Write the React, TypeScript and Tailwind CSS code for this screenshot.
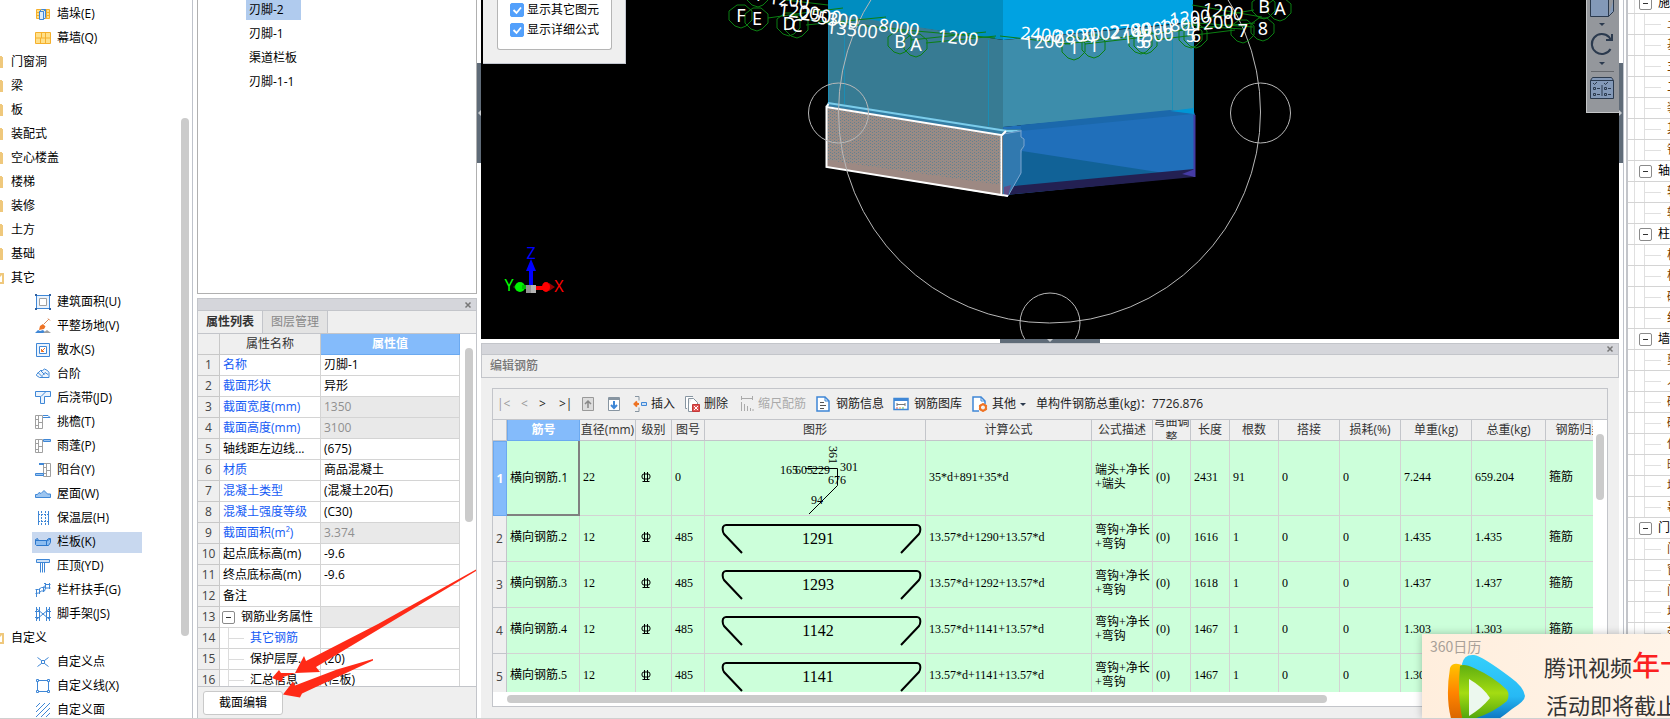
import React, { useState } from 'react';

type TreeItem = { label: string; icon?: string; open?: boolean };

const treeItems: TreeItem[] = [
  { label: '墙垛(E)', icon: 'pier' },
  { label: '幕墙(Q)', icon: 'curtain' },
  { label: '门窗洞' },
  { label: '梁' },
  { label: '板' },
  { label: '装配式' },
  { label: '空心楼盖' },
  { label: '楼梯' },
  { label: '装修' },
  { label: '土方' },
  { label: '基础' },
  { label: '其它', open: true },
  { label: '建筑面积(U)', icon: 'area' },
  { label: '平整场地(V)', icon: 'ground' },
  { label: '散水(S)', icon: 'apron' },
  { label: '台阶', icon: 'step' },
  { label: '后浇带(JD)', icon: 'strip' },
  { label: '挑檐(T)', icon: 'eave' },
  { label: '雨蓬(P)', icon: 'canopy' },
  { label: '阳台(Y)', icon: 'balcony' },
  { label: '屋面(W)', icon: 'roof' },
  { label: '保温层(H)', icon: 'insulation' },
  { label: '栏板(K)', icon: 'parapet' },
  { label: '压顶(YD)', icon: 'coping' },
  { label: '栏杆扶手(G)', icon: 'railing' },
  { label: '脚手架(JS)', icon: 'scaffold' },
  { label: '自定义', open: true },
  { label: '自定义点', icon: 'point' },
  { label: '自定义线(X)', icon: 'line' },
  { label: '自定义面', icon: 'face' },
];

const B = '#3f87d6';
const L = '#dcebfa';
const G = '#a0a0a0';

const treeIcons: Record<string, React.ReactNode> = {
  pier: (
    <>
      <path d="M1.500 3.500h13v9h-13zM1.500 6.500h13M1.500 9.500h13M11.500 3.500v9" fill="#ffe08a" stroke="#f5b02c" />
      <path d="M4.500 5.500l2-2h4v8l-2 2h-4zM8.500 5.500v8M4.500 5.500h4l2-2" fill={L} stroke={B} />
    </>
  ),
  curtain: (
    <path d="M.5 2.500h15v11H.5zM.5 8h15M6.500 2.500V8M10.500 8v5.500M10.500 2.500V8M5.500 8v5.500" fill="#ffe08a" stroke="#f5b02c" />
  ),
  area: (
    <>
      <path d="M1.500 1.500h13v13h-13z" fill="#eaf3fd" stroke={B} />
      <path d="M4.500 4.500h7v7h-7z" fill="#fff" stroke={G} />
      <path d="M0 0h2v2H0zM14 0h2v2h-2zM0 14h2v2H0zM14 14h2v2h-2z" fill="#2f5f9f" />
    </>
  ),
  ground: (
    <>
      <path d="M0 15l3-3 2 1 3-1 3 3z" fill={B} />
      <path d="M8 15l4-3 4 3z" fill={G} />
      <path d="M9 6l5-5M13 .5l2 2" stroke="#d98a5c" fill="none" />
      <path d="M5 8l3-2 2.500 2.500L9 11l-5 1z" fill="#ee7324" />
    </>
  ),
  apron: (
    <>
      <path d="M1.500 1.500h13v13h-13z" fill="#eaf3fd" stroke={B} />
      <path d="M4.500 4.500h7v7h-7z" fill="#fff" stroke={B} />
      <path d="M10 6L6.500 9.500M6.500 7v2.500H9" stroke="#ee7324" fill="none" />
    </>
  ),
  step: (
    <path d="M1.500 8.500l4-4h2l2-1.500 3 1.500 1.500 2v5h-9.500l-3-2zM3 6.500l5 5M5.500 4.500l4 4M7.500 9.500l2.500-3 3 2" fill="#eef5fd" stroke={B} />
  ),
  strip: (
    <path d="M.5 1.500h15v5h-6v7h-4v-7h-5zM6 6.500l5-5" fill="#eaf3fd" stroke={B} />
  ),
  eave: (
    <>
      <path d="M.5 1.500h7v13h-7zM3.500 1.500v13M.5 5.500h3M3.500 8.500h4M.5 11.500h3" fill="none" stroke={G} />
      <path d="M8 1.500h5l2 2M8 3.500h7" fill="none" stroke={B} />
    </>
  ),
  canopy: (
    <>
      <path d="M.5 1.500h7v13h-7zM3.500 1.500v13M.5 5.500h3M3.500 8.500h4M.5 11.500h3" fill="none" stroke={G} />
      <path d="M8.500 1.500h7v2h-7z" fill="#9cc5f0" stroke={B} />
    </>
  ),
  balcony: (
    <>
      <path d="M8.500 1.500h7v13h-7zM11.500 1.500v13M8.500 5.500h3M11.500 8.500h4M8.500 11.500h3" fill="none" stroke={G} />
      <path d="M4 2h5" stroke={B} strokeWidth="2" />
      <path d="M.5 11.500h8v2h-8z" fill="#9cc5f0" stroke={B} />
    </>
  ),
  roof: <path d="M.5 11.500v-3h2l1.500-2 2 1 3-3 3.500 3.500h3v3.500z" fill="#9cc5f0" stroke={B} />,
  insulation: (
    <>
      <path d="M3.500 1v14M13.500 1v14" stroke={B} />
      <path d="M6.500 1v14M10.500 1v14" stroke={B} strokeDasharray="2 1" />
      <path d="M3 4.500h11M3 11.500h11" stroke={B} strokeDasharray="2 1" />
    </>
  ),
  parapet: (
    <>
      <path d="M.5 5.500l2-1 1 2h8l2-2h2v4l-2 3h-12l-1-1z" fill="#8dbdf0" stroke="#2b77cc" />
      <path d="M.5 6.500h11v5M12 7l3-2" fill="none" stroke="#2b77cc" />
    </>
  ),
  coping: <path d="M1.500 1.500h13v3h-13zM5.500 14.500v-10M7.500 14.500v-10M9.500 14.500v-10" fill="#cfe2f7" stroke={B} />,
  railing: (
    <path d="M1.500 15V7M.5 7.500h3l3-2h3l1-3h5M.5 11.500l3-.5 3-2h3l1-3h5M4.500 12V7M8.500 10V4.500M10.500 7V1M14.500 7V1M9 1.500h2" fill="none" stroke={B} />
  ),
  scaffold: (
    <path d="M1.500 1v14M4.500 1v14M11.500 1v14M14.500 1v14M0 5.500h5M0 11.500h5M11 5.500h5M11 11.500h5M2 3l12 10M14 3L2 13" fill="none" stroke={B} />
  ),
  point: <path d="M2.500 3.500l4 3M9.500 9.500l4 3M13.500 3.500l-4 3M6.500 9.500l-4 3M6.500 6.500h3v3h-3z" fill="none" stroke={B} />,
  line: (
    <>
      <path d="M2.500 2.500h11v11h-11z" fill="none" stroke={B} />
      <path d="M1.500 1.500h2v2h-2zM12.500 1.500h2v2h-2zM1.500 12.500h2v2h-2zM12.500 12.500h2v2h-2z" fill="#fff" stroke={B} />
    </>
  ),
  face: <path d="M1 5l4-4M1 10l9-9M1 15L15 1M6 15l9-9M11 15l4-4" fill="none" stroke={B} />,
};

type Prop = { name: string; value?: string; kind?: 'blue' | 'locked' | 'group' | 'child' | 'childBlue' };

const properties: Prop[] = [
  { name: '名称', value: '刃脚-1', kind: 'blue' },
  { name: '截面形状', value: '异形', kind: 'blue' },
  { name: '截面宽度(mm)', value: '1350', kind: 'locked' },
  { name: '截面高度(mm)', value: '3100', kind: 'locked' },
  { name: '轴线距左边线...', value: '(675)' },
  { name: '材质', value: '商品混凝土', kind: 'blue' },
  { name: '混凝土类型', value: '(混凝土20石)', kind: 'blue' },
  { name: '混凝土强度等级', value: '(C30)', kind: 'blue' },
  { name: '截面面积(m²)', value: '3.374', kind: 'locked' },
  { name: '起点底标高(m)', value: '-9.6' },
  { name: '终点底标高(m)', value: '-9.6' },
  { name: '备注' },
  { name: '钢筋业务属性', kind: 'group' },
  { name: '其它钢筋', kind: 'childBlue' },
  { name: '保护层厚...', value: '(20)', kind: 'child' },
  { name: '汇总信息', value: '(栏板)', kind: 'child' },
];

const rebars = [
  { name: '横向钢筋.2', len: '1291', formula: '13.57*d+1290+13.57*d', total: '1616', weight: '1.435' },
  { name: '横向钢筋.3', len: '1293', formula: '13.57*d+1292+13.57*d', total: '1618', weight: '1.437' },
  { name: '横向钢筋.4', len: '1142', formula: '13.57*d+1141+13.57*d', total: '1467', weight: '1.303' },
  { name: '横向钢筋.5', len: '1141', formula: '13.57*d+1141+13.57*d', total: '1467', weight: '1.303' },
];

const layerGroups = [
  { name: '施工段', children: ['土方工程', '基础工程', '主体结构', '二次结构', '装饰装修', '其它土建', '钢筋工程'] },
  { name: '轴线', children: ['轴网', '辅助轴线'] },
  { name: '柱', children: ['柱', '构造柱', '砌体柱', '约束边缘柱'] },
  { name: '墙', children: ['剪力墙', '人防门框墙', '砌体墙', '砌体加筋', '保温墙', '暗梁', '墙垛', '幕墙'] },
  { name: '门窗洞', children: ['门', '窗', '门联窗', '墙洞', '带形窗', '带形洞', '飘窗', '老虎窗'] },
];

const ComponentTree: React.FC = () => (
  <nav className="relative w-[193px] shrink-0 overflow-hidden border-r border-[#bfc3cb] bg-white pt-[2px]">
    <ul>
      {treeItems.map((item) => (
        <li key={item.label} className="flex h-6 items-center">
          {item.icon ? (
            <button
              className={`ml-8 flex h-[21px] w-[110px] items-center gap-[6px] pl-[3px] text-left whitespace-nowrap ${item.icon === 'parapet' ? 'bg-[#c8d8ef]' : ''}`}
            >
              <svg className="h-4 w-4 shrink-0" viewBox="0 0 16 16">{treeIcons[item.icon]}</svg>
              {item.label}
            </button>
          ) : (
            <button className="flex items-center gap-[7px]">
              <svg className="h-[14px] w-1" viewBox="0 0 4 14">
                {item.open ? (
                  <path d="M0 2h4v11H0v-2h2V4L0 6z" fill="#efc87c" />
                ) : (
                  <path d="M0 1h2v1h1v11H0z" fill="#efc87c" />
                )}
              </svg>
              {item.label}
            </button>
          )}
        </li>
      ))}
    </ul>
    <div className="absolute top-[118px] right-[3px] h-[518px] w-2 rounded-full bg-[#cbcbcb]" />
  </nav>
);

const PropertyPanel: React.FC = () => (
  <section className="flex h-[420px] shrink-0 flex-col border border-b-0 border-[#c3c5ca] bg-[#efefef]">
    <div className="flex h-3 shrink-0 items-center justify-end border-b border-[#c3c5ca] bg-[#d5d6db] pr-1">
      <CloseButton />
    </div>
    <div className="flex h-[23px] shrink-0 border-b border-[#c3c5ca]">
      <button className="w-[65px] border-r border-[#c3c5ca] font-bold text-[#333]">属性列表</button>
      <button className="w-[65px] border-r border-[#c3c5ca] bg-[#e3e3e3] text-[#888]">图层管理</button>
    </div>
    <div className="relative min-h-0 flex-1 overflow-hidden border-b border-[#c3c5ca] bg-white">
      <table className="w-[262px] table-fixed border-separate border-spacing-0">
        <colgroup>
          <col className="w-[22px]" />
          <col className="w-[101px]" />
          <col className="w-[139px]" />
        </colgroup>
        <thead>
          <tr className="h-[21px] bg-[#efefef] text-[#333]">
            <th className="border-r border-b border-[#c8c8c8]" />
            <th className="border-r border-b border-[#c8c8c8] p-0 font-normal">属性名称</th>
            <th className="border-r border-b border-[#6ba9f0] bg-[#84bbfb] p-0 font-bold text-white">属性值</th>
          </tr>
        </thead>
        <tbody>
          {properties.map((p, i) => {
            const blue = p.kind === 'blue' || p.kind === 'locked' || p.kind === 'childBlue';
            const child = p.kind === 'child' || p.kind === 'childBlue';
            const grey = p.kind === 'locked' || p.kind === 'group';
            return (
              <tr key={p.name} className="h-[21px] whitespace-nowrap">
                <th className="border-r border-b border-[#c8c8c8] bg-[#efefef] p-0 font-normal text-[#444]">{i + 1}</th>
                <td className={`border-r border-b border-[#d4d4d4] p-0 ${blue ? 'text-[#155bf5]' : ''}`}>
                  <div className={`flex h-5 items-center ${child ? '' : 'pl-[3px]'}`}>
                    {p.kind === 'group' && <ExpandBox className="mr-[6px] -ml-px" />}
                    {child && (
                      <span className="mr-[6px] ml-[8px] flex h-[21px] w-4 items-center border-l border-[#dcdcdc]">
                        <span className="h-px w-full bg-[#dcdcdc]" />
                      </span>
                    )}
                    {p.name}
                  </div>
                </td>
                <td className={`border-r border-b border-[#d4d4d4] py-0 pr-0 pl-[3px] ${grey ? 'bg-[#e9e9e9] text-[#909090]' : ''}`}>
                  {p.value}
                </td>
              </tr>
            );
          })}
        </tbody>
      </table>
      <div className="absolute top-[14px] right-[3px] h-[174px] w-2 rounded-full bg-[#cbcbcb]" />
    </div>
    <div className="flex h-[31px] shrink-0 items-center pt-px pl-[5px]">
      <button className="h-6 w-20 rounded-[3px] border border-[#c9c9c9] bg-white">截面编辑</button>
    </div>
  </section>
);

const CloseButton: React.FC = () => (
  <button aria-label="关闭">
    <svg className="h-2 w-2" viewBox="0 0 8 8">
      <path d="M1.500 1.500l5 5M6.500 1.500l-5 5" stroke="#777" strokeWidth="1.500" />
    </svg>
  </button>
);

const ExpandBox: React.FC<{ className?: string }> = ({ className = '' }) => (
  <button aria-label="折叠" className={`shrink-0 ${className}`}>
    <svg className="h-[13px] w-[13px]" viewBox="0 0 13 13">
      <rect x=".5" y=".5" width="12" height="12" rx="1.500" fill="#fff" stroke="#8a8a8a" />
      <path d="M4 6.500h5" stroke="#333" />
    </svg>
  </button>
);

// x, y, text, tilt in degrees
const dimensions: [number, number, string, number][] = [
  [789, 0, '1200', 6],
  [799, 12, '1200', 6],
  [821, 16, '2500', 6],
  [838, 20, '5300', 6],
  [852, 30, '13500', 6],
  [899, 28, '8000', 8],
  [958, 38, '1200', 6],
  [1041, 35, '2400', 5],
  [1044, 42, '1200', -3],
  [1075, 36, '2800', -4],
  [1100, 34, '3002', -4],
  [1130, 31, '2700', -4],
  [1152, 29, '8000', -4],
  [1148, 36, '11500', -4],
  [1180, 25, '1800', -5],
  [1190, 18, '1200', -5],
  [1213, 23, '1200', -4],
  [1223, 12, '1200', 8],
];

const axisMarks: [number, number, string][] = [
  [758, -5, '1'],
  [741, 16, 'F'],
  [757, 19, 'E'],
  [789, 24, 'D'],
  [797, 26, 'C'],
  [900, 42, 'B'],
  [916, 45, 'A'],
  [1074, 48, '1'],
  [1094, 46, '1'],
  [1141, 42, '5'],
  [1146, 42, '6'],
  [1191, 36, '5'],
  [1196, 36, '6'],
  [1243, 31, '7'],
  [1263, 29, '8'],
  [1264, 7, 'B'],
  [1280, 9, 'A'],
];

const ModelView: React.FC = () => (
  <svg className="absolute top-0 left-0 h-[339px] w-[1138px]" viewBox="481 0 1138 339" fontFamily="'Noto Sans', sans-serif">
    <defs>
      <pattern id="mesh" width="4" height="3" patternUnits="userSpaceOnUse">
        <rect width="4" height="3" fill="#998b85" />
        <path d="M0 0h1v1H0zM2 2h1v1H2z" fill="#65818f" />
      </pattern>
    </defs>
    <path d="M828 0h176v40L828 15z" fill="#008dc0" />
    <path d="M1003 0h190v22l-190 18z" fill="#00a2e2" />
    <path d="M828 12l56 10 119 18v90L828 103z" fill="#377b93" />
    <path d="M1003 40l190-17v87l-190 17z" fill="#3d8dab" />
    <path d="M828.500 12v90M844.500 20v84M988.500 40v86M1172.500 26v84M1193.500 20v90" stroke="#1b8db5" />
    <path d="M1003 127l190-18 2 6v61l-189 19z" fill="#206fba" />
    <path d="M1021 125l149-15 23 4-172 17z" fill="#1b68ab" />
    <path d="M1170 111l24-3v6z" fill="#0096d5" />
    <path d="M1022 151l155 24-172 14 8-12z" fill="#116297" />
    <path d="M1004 187l190-18v8l-188 18z" fill="#232052" />
    <path d="M1182 174l13-5v8z" fill="#453ba5" />
    <path d="M1194.500 115v62" stroke="#453ba5" strokeWidth="2" />
    <path d="M828 102l175 27h18l-1 4-18 3-176-30z" fill="#347da4" />
    <path d="M828 103l179 28h13" stroke="#7ccdea" strokeWidth="2" fill="none" />
    <path d="M1003 134l18-4v7l3 2v9l-3 4v22l-14 23-4-2z" fill="#3179af" />
    <path d="M1021 130v7l3 2v7l-3 4v23l-13 23M1003 134l18-3" stroke="#7ba5cf" fill="none" />
    <path d="M1004 187l7-2-3 11-4-1z" fill="#5e4e88" />
    <path d="M826 107l176 28v61l-176-29z" fill="url(#mesh)" />
    <path d="M827 160l175 25v10l-175-28z" fill="#9d8983" />
    <path d="M826.500 107l175 28v60l-175-28zM826.500 107l2-3M1002 135l4-4M1002 195l6 1" fill="none" stroke="#fff" strokeWidth="2" />

    <g fill="none" stroke="#b8b8b8">
      <circle cx="1049.500" cy="112" r="211" />
      <circle cx="838.500" cy="113" r="30" />
      <circle cx="1260.500" cy="113" r="30" />
      <circle cx="1050" cy="323" r="30" />
    </g>

    <g stroke="#0b7f12" fill="none">
      <path d="M760 -3l68 8M768 18l35-5 40-5M806 25l80-8M810 20l95 10 90 8M911 40l75-8M926 43l70-7M1000 36l70 8M1065 44l120-14M1085 44l60-7M1155 40l80-10M1195 28l60-5M1192 5l70 12M1195 20l59-10M1253 27l-70-5M1210 27l33 2" />
      {axisMarks.map(([x, y], i) => (
        <path
          key={i}
          transform={`translate(${x} ${y})`}
          d="M-4 -11h8l7 6v9l-6 6-5 2-6-2-6-6v-9z"
        />
      ))}
    </g>
    <g fill="#fff" fontSize="18" textAnchor="middle">
      {dimensions.map(([x, y, text, tilt], i) => (
        <text key={i} transform={`translate(${x} ${y}) rotate(${tilt})`} dy="6">{text}</text>
      ))}
      {axisMarks.map(([x, y, text], i) => (
        <text key={i} x={x} y={y + 6}>{text}</text>
      ))}
    </g>

    <path d="M531 285v-16" stroke="#00f" strokeWidth="4" />
    <path d="M526 271l5-12 5 12z" fill="#00f" />
    <path d="M536 288h10" stroke="#f00" strokeWidth="4" />
    <path d="M549 283l6 4-6 4z" fill="#900" />
    <ellipse cx="546" cy="287" rx="4" ry="5" fill="#f00" />
    <path d="M518 283l-5 4 5 4z" fill="#006a00" />
    <circle cx="520" cy="287" r="5" fill="#00f400" />
    <path d="M522 287h5" stroke="#00c000" strokeWidth="4" />
    <path d="M526 285h10v8h-10z" fill="#b5b5b5" />
    <path d="M526 285h5v8h-5z" fill="#949494" />
    <g fontSize="16" textAnchor="middle">
      <text x="531" y="259" fill="#00f">Z</text>
      <text x="509" y="291" fill="#0f0">Y</text>
      <text x="559" y="292" fill="#f00">X</text>
    </g>
  </svg>
);

const Option: React.FC<{ label: string }> = ({ label }) => {
  const [checked, setChecked] = useState(true);
  return (
    <label className="flex h-6 items-center gap-[3px]">
      <span className="relative flex h-[14px] w-[14px]">
        <input
          type="checkbox"
          checked={checked}
          onChange={(e) => setChecked(e.target.checked)}
          className="h-[14px] w-[14px] appearance-none rounded-[2px] border border-[#53a0fb] checked:bg-[#53a0fb]"
        />
        {checked && (
          <svg className="pointer-events-none absolute inset-0 h-[14px] w-[14px]" viewBox="0 0 14 14">
            <path d="M3.500 7l3 3 4.500-5.500" fill="none" stroke="#fff" strokeWidth="1.800" />
          </svg>
        )}
      </span>
      {label}
    </label>
  );
};

const Viewport: React.FC = () => (
  <main className="relative min-h-0 flex-1 overflow-hidden bg-black">
    <ModelView />
    <div className="absolute top-0 left-[2px] h-16 w-[143px] border-r border-b border-[#c3c7d0] bg-[#efefef] pr-[13px] pl-[14px]">
      <div className="flex h-[50px] flex-col justify-end rounded-b-[3px] border border-t-0 border-[#b5b5b5] bg-white pb-[9px] pl-3">
        <Option label="显示其它图元" />
        <Option label="显示详细公式" />
      </div>
    </div>
    <div className="absolute top-0 right-0 flex h-[113px] w-[33px] flex-col items-center border-b border-l border-[#c4c6c8] bg-[#94979c] pr-[2px]">
      <button aria-label="视图">
        <svg className="h-[18px] w-6" viewBox="0 0 24 18" fill="#8399b8" stroke="#2b3a4e">
          <path d="M.5 0v16.500h18V0M18.500 16.500l5-5V0" />
        </svg>
      </button>
      <Caret className="mt-[5px]" />
      <button aria-label="旋转" className="mt-[6px]">
        <svg className="h-6 w-6" viewBox="0 0 24 24" fill="none" stroke="#2b3a4e" strokeWidth="2">
          <path d="M20.500 17A10 10 0 1 1 19 5l2 3M22 2v6h-6" />
        </svg>
      </button>
      <Caret className="mt-[6px]" />
      <div className="mt-[6px] h-px w-[23px] shrink-0 bg-[#66696e]" />
      <button aria-label="显示设置" className="mt-1">
        <svg className="h-6 w-6" viewBox="0 0 24 24" fill="none" stroke="#2b3a4e">
          <path d="M.5 4.500l2-3h19l2 3v18H.500z" fill="#8399b8" />
          <path d="M.5 4.500h23M12 9v11M3 7l1.500 1.500L7 6M14 7l1.500 1.500L18 6M3.500 11.500h2v2h-2zM3.500 17.500h2v2h-2zM14.500 11.500h2v2h-2zM14.500 17.500h2v2h-2zM7 12.500h3M7 18.500h3M18 12.500h3M18 18.500h3" />
        </svg>
      </button>
    </div>
  </main>
);

const Caret: React.FC<{ className?: string }> = ({ className = '' }) => (
  <svg className={`h-[3px] w-[6px] shrink-0 ${className}`} viewBox="0 0 6 3">
    <path d="M0 0h6L3 3z" fill="#2b3a4e" />
  </svg>
);

const RebarToolbar: React.FC = () => (
  <div className="flex h-[31px] shrink-0 items-center border-b border-[#c3c5ca] pl-1 whitespace-nowrap text-[#222]">
    <button className="w-6 text-left text-[#999]">|&lt;</button>
    <button className="w-[18px] text-left text-[#999]">&lt;</button>
    <button className="w-5 text-left">&gt;</button>
    <button className="w-[22px] text-left">&gt;|</button>
    <button aria-label="上移" className="mr-3">
      <svg className="h-[14px] w-[14px]" viewBox="0 0 14 14" fill="none">
        <path d="M1.500.5h11v13h-11z" fill="#ddd" stroke="#999" />
        <path d="M7 11V4M4 7l3-3 3 3" stroke="#888" strokeWidth="1.500" />
      </svg>
    </button>
    <button aria-label="下移" className="mr-3">
      <svg className="h-[14px] w-[14px]" viewBox="0 0 14 14" fill="none">
        <path d="M1.500.5h11v13h-11z" fill="#fff" stroke="#8795a1" />
        <path d="M1 2h12" stroke="#8795a1" strokeWidth="2" />
        <path d="M7 4v7M4 8l3 3 3-3" stroke={B} strokeWidth="2" />
      </svg>
    </button>
    <button className="mr-[9px] flex items-center gap-1">
      <svg className="h-4 w-[14px]" viewBox="0 0 14 16" fill="none">
        <path d="M2 .5h4v4M2 15.500h4v-4" stroke="#8795a1" />
        <path d="M6 8H1.500M4 5.500L1.500 8 4 10.500" stroke="#ee7324" strokeWidth="2" />
        <path d="M8.500 6.500h5v3h-5z" fill="#cfe2f7" stroke={B} />
      </svg>
      插入
    </button>
    <button className="mr-3 flex items-center gap-1">
      <svg className="h-4 w-4" viewBox="0 0 16 16" fill="none">
        <path d="M9 .5H1.500v12H3M4.500 2.500h5l4 4v9h-9z" stroke="#8795a1" fill="#fff" />
        <path d="M8.500 8.500h7v7h-7z" fill="#e05656" stroke="#c43838" />
        <path d="M10 10l4 4M14 10l-4 4" stroke="#fff" />
      </svg>
      删除
    </button>
    <button className="mr-[10px] flex items-center gap-1 text-[#aaa]" disabled>
      <svg className="h-4 w-[14px]" viewBox="0 0 14 16" fill="none" stroke="#aaa">
        <path d="M1.500 0v4M12.500 0v4M1.500 2.500h11" />
        <path d="M1.500 6v9M4.500 8v7M7.500 10v5M10.500 12v3M13 13v2" />
      </svg>
      缩尺配筋
    </button>
    <button className="mr-[9px] flex items-center gap-[6px]">
      <svg className="h-4 w-[14px]" viewBox="0 0 14 16" fill="none" stroke={B}>
        <path d="M1 1h8l4 4v10H1z" fill="#fff" strokeWidth="1.500" />
        <path d="M9 1v4h4" />
        <path d="M4 6.500h4M4 9.500h6M4 12.500h4" stroke="#555" />
      </svg>
      钢筋信息
    </button>
    <button className="mr-[10px] flex items-center gap-[5px]">
      <svg className="h-4 w-4" viewBox="0 0 16 16" fill="none">
        <path d="M1 2.500h14v11H1z" fill="#fff" stroke={B} strokeWidth="1.500" />
        <path d="M1 3.500h14" stroke={B} strokeWidth="3" />
        <path d="M4 7v3M4 8.500h8M12 7v3" stroke="#777" />
        <path d="M3 12h2" stroke="#e05656" />
        <path d="M6 12h2" stroke="#f5b02c" />
        <path d="M9 12h2" stroke="#5cb85c" />
      </svg>
      钢筋图库
    </button>
    <button className="mr-[10px] flex items-center gap-1">
      <svg className="h-4 w-4" viewBox="0 0 16 16" fill="none">
        <path d="M13 8V5L9 1H1v14h6" fill="#fff" stroke={B} strokeWidth="1.500" />
        <path d="M9 1v4h4" stroke={B} />
        <circle cx="11" cy="11.500" r="3" stroke="#ee7324" strokeWidth="2" />
        <path d="M11 7v2M11 14v2M7 9.500l2 1M13 12.500l2 1M7 13.500l2-1M13 10.500l2-1" stroke="#ee7324" strokeWidth="1.500" />
      </svg>
      其他
      <Caret />
    </button>
    <span>单构件钢筋总重(kg)：7726.876</span>
  </div>
);

const GradeSymbol: React.FC = () => (
  <svg className="ml-[2px] h-[10px] w-[10px]" viewBox="0 0 10 10" fill="none" stroke="#000">
    <rect x="1" y="2" width="8" height="5" rx="2" />
    <path d="M3.500 0v9M6.500 0v9M1.500 9.500h7" />
  </svg>
);

const headClass = 'h-[21px] border-r border-b border-[#c3c5ca] p-0 font-normal';
const cellClass = 'border-r border-b border-[#d3d3d3] pt-0 pr-0 pb-[3px] pl-[3px]';

const RebarTable: React.FC = () => (
  <table className="w-[1121px] table-fixed border-separate border-spacing-0">
    <colgroup>
      <col className="w-[14px]" />
      <col className="w-[73px]" />
      <col className="w-[56px]" />
      <col className="w-[36px]" />
      <col className="w-[33px]" />
      <col className="w-[221px]" />
      <col className="w-[166px]" />
      <col className="w-[61px]" />
      <col className="w-[38px]" />
      <col className="w-[39px]" />
      <col className="w-[49px]" />
      <col className="w-[61px]" />
      <col className="w-[61px]" />
      <col className="w-[71px]" />
      <col className="w-[74px]" />
      <col className="w-[68px]" />
    </colgroup>
    <thead>
      <tr className="bg-[#efefef] whitespace-nowrap text-[#333]">
        <th className={headClass} />
        <th className="h-[21px] border border-t-0 border-[#6ba9f0] bg-[#84bbfb] p-0 font-bold text-white">筋号</th>
        <th className={headClass}>直径(mm)</th>
        <th className={headClass}>级别</th>
        <th className={headClass}>图号</th>
        <th className={headClass}>图形</th>
        <th className={headClass}>计算公式</th>
        <th className={headClass}>公式描述</th>
        <th className={headClass}>
          <div className="flex h-5 items-center justify-center overflow-hidden leading-4 whitespace-normal">弯曲调整</div>
        </th>
        <th className={headClass}>长度</th>
        <th className={headClass}>根数</th>
        <th className={headClass}>搭接</th>
        <th className={headClass}>损耗(%)</th>
        <th className={headClass}>单重(kg)</th>
        <th className={headClass}>总重(kg)</th>
        <th className={headClass}>钢筋归类</th>
      </tr>
    </thead>
    <tbody className="bg-[#ccffda] font-['Liberation_Serif','Noto_Sans_CJK_SC',serif] leading-[14px]">
      <tr className="h-[75px]">
        <th className="border border-[#6ba9f0] bg-[#84bbfb] p-0 font-['Open_Sans',sans-serif] text-white">1</th>
        <td className="border-r-2 border-b-2 border-[#808080] py-0 pr-0 pl-[3px] font-['Open_Sans','Noto_Sans_CJK_SC',sans-serif]">横向钢筋.1</td>
        <td className={cellClass}>22</td>
        <td className={cellClass}><GradeSymbol /></td>
        <td className={cellClass}>0</td>
        <td className="border-r border-b border-[#d3d3d3] py-0 pr-0 pl-[3px]">
          <svg className="block h-[74px] w-[215px]" viewBox="0 0 215 74" fontSize="12">
            <path d="M97 27.500h32.500v17L101 73" fill="none" stroke="#000" />
            <text x="72" y="33">165</text>
            <text x="87" y="33">605</text>
            <text x="104" y="33">229</text>
            <text x="132" y="30">301</text>
            <text x="120" y="43">676</text>
            <text x="103" y="63">94</text>
            <text transform="translate(121 5) rotate(90)">361</text>
          </svg>
        </td>
        <td className={cellClass}>35*d+891+35*d</td>
        <td className={cellClass}>端头+净长<br />+端头</td>
        <td className={cellClass}>(0)</td>
        <td className={cellClass}>2431</td>
        <td className={cellClass}>91</td>
        <td className={cellClass}>0</td>
        <td className={cellClass}>0</td>
        <td className={cellClass}>7.244</td>
        <td className={cellClass}>659.204</td>
        <td className={cellClass}>箍筋</td>
      </tr>
      {rebars.map((r, i) => (
        <tr key={r.name} className="h-[46px]">
          <th className="border-r border-b border-[#c3c5ca] bg-[#efefef] p-0 font-['Open_Sans',sans-serif] font-normal text-[#444]">{i + 2}</th>
          <td className={cellClass}>{r.name}</td>
          <td className={cellClass}>12</td>
          <td className={cellClass}><GradeSymbol /></td>
          <td className={cellClass}>485</td>
          <td className={cellClass}>
            <svg className="block h-[42px] w-[215px]" viewBox="0 0 215 42">
              <path
                d="M34 37L16 18q-2-3-1-7 1-2 3-2h191q2 0 3 2 1 4-1 7L193 37"
                fill="none"
                stroke="#000"
                strokeWidth="2"
              />
              <text x="110" y="28" fontSize="16" textAnchor="middle">{r.len}</text>
            </svg>
          </td>
          <td className={cellClass}>{r.formula}</td>
          <td className={cellClass}>弯钩+净长<br />+弯钩</td>
          <td className={cellClass}>(0)</td>
          <td className={cellClass}>{r.total}</td>
          <td className={cellClass}>1</td>
          <td className={cellClass}>0</td>
          <td className={cellClass}>0</td>
          <td className={cellClass}>{r.weight}</td>
          <td className={cellClass}>{r.weight}</td>
          <td className={cellClass}>箍筋</td>
        </tr>
      ))}
    </tbody>
  </table>
);

const RebarPanel: React.FC = () => (
  <section className="flex h-[375px] shrink-0 flex-col bg-[#efefef]">
    <div className="flex h-3 shrink-0 items-center justify-end border border-[#c3c5ca] bg-[#d5d6db] pr-1">
      <CloseButton />
    </div>
    <h2 className="flex h-[23px] shrink-0 items-center border border-t-0 border-[#c3c5ca] pl-2 font-medium text-[#777]">编辑钢筋</h2>
    <div className="flex min-h-0 flex-1 p-[11px] pt-[10px]">
      <div className="flex min-w-0 flex-1 flex-col border border-[#c3c5ca]">
        <RebarToolbar />
        <div className="flex min-h-0 flex-1 bg-white">
          <div className="min-w-0 flex-1 overflow-hidden">
            <RebarTable />
          </div>
          <div className="w-[14px] shrink-0 pt-[14px] pl-[3px]">
            <div className="h-[66px] w-2 rounded-full bg-[#cbcbcb]" />
          </div>
        </div>
        <div className="h-[14px] shrink-0 bg-white pt-[3px] pl-[14px]">
          <div className="h-2 w-[74.5%] rounded-full bg-[#cbcbcb]" />
        </div>
      </div>
    </div>
  </section>
);

const LayerTree: React.FC = () => (
  <aside className="flex w-[47px] shrink-0 overflow-hidden border-l border-[#bfc3cb] bg-white pl-[2px]">
    <div className="flex flex-1 flex-col justify-start overflow-hidden border-l-2 border-[#c3c5ca]">
      <ul className="-mt-[7px]">
        {layerGroups.map((group) => (
          <React.Fragment key={group.name}>
            <li className="flex h-[21px] items-center border-b border-[#d4d4d4] pl-[6px] whitespace-nowrap">
              <span className="mr-1 h-full w-px shrink-0 bg-[#e0e0e0]" />
              <ExpandBox className="mr-[6px]" />
              {group.name}
            </li>
            {group.children.map((child) => (
              <li key={child} className="flex h-[21px] items-center border-b border-[#d4d4d4] pl-[6px] whitespace-nowrap text-[#7a3d00]">
                <span className="mr-[9px] h-full w-px shrink-0 bg-[#e0e0e0]" />
                <span className="mr-[6px] flex h-full w-[17px] shrink-0 items-center border-l border-[#e0e0e0]">
                  <span className="h-px w-full bg-[#e0e0e0]" />
                </span>
                {child}
              </li>
            ))}
          </React.Fragment>
        ))}
      </ul>
    </div>
  </aside>
);

const AdPopup: React.FC = () => (
  <div className="absolute right-0 bottom-0 h-[84px] w-[248px] overflow-hidden bg-linear-to-r from-[#ffeedd] to-[#fff4e8] font-['Noto_Sans_CJK_SC',sans-serif] whitespace-nowrap shadow-[0_0_8px_rgba(0,0,0,0.25)]">
    <div className="pl-2 text-sm leading-6 text-[#a8a098]">360日历</div>
    <svg className="absolute top-5 left-6 h-[66px] w-[82px]" viewBox="0 0 82 66">
      <defs>
        <linearGradient id="adBlue" x1="0" y1="0" x2="0" y2="1">
          <stop offset="0" stopColor="#35d0fb" />
          <stop offset=".6" stopColor="#27b9f5" />
          <stop offset="1" stopColor="#0667b5" />
        </linearGradient>
        <linearGradient id="adOrange" x1="0" y1="0" x2="0" y2="1">
          <stop offset="0" stopColor="#ffc400" />
          <stop offset=".5" stopColor="#ff8400" />
          <stop offset="1" stopColor="#d46200" />
        </linearGradient>
        <linearGradient id="adGreen" x1="0" y1="0" x2="0" y2="1">
          <stop offset="0" stopColor="#5fae10" />
          <stop offset=".5" stopColor="#a4dc12" />
          <stop offset="1" stopColor="#48a00c" />
        </linearGradient>
      </defs>
      <path d="M16 10Q18 0 28 1q8 1 36 22 14 10 15 19 0 5-13 13-12 10-22 15H14z" fill="url(#adBlue)" />
      <path d="M4 14q2-5 8-4 7 1 12 4v54H6Q-1 45 4 14z" fill="url(#adOrange)" />
      <path d="M14 12q4-3 14 2 20 9 33 22 3 5 0 11-14 12-34 18-6 3-10 2-6-22-3-55z" fill="url(#adGreen)" />
      <path d="M23 25q14 8 21 19Q36 54 23 62z" fill="#ecf8ee" />
    </svg>
    <div className="-mt-[13px] pl-[122px] text-[22px] leading-[38px] text-[#333]">
      腾讯视频<span className="text-[28px] font-medium text-[#fb2020]">年卡</span>
    </div>
    <div className="pl-[124px] text-[22px] leading-[38px] text-[#333]">活动即将截止</div>
  </div>
);

const App: React.FC = () => (
  <div className="relative flex h-screen overflow-hidden border-b border-[#d0d0d0] bg-white font-['Open_Sans','Noto_Sans_CJK_SC',sans-serif] text-xs text-black">
    <ComponentTree />

    <div className="flex w-[284px] shrink-0 flex-col gap-1 pl-1">
      <div className="min-h-0 flex-1 border-x border-b border-[#b0b0b0] bg-white pl-12">
        <button className="mb-[2px] block h-5 w-[55px] bg-[#b0cbee] pl-[3px] text-left">刃脚-2</button>
        <button className="block h-6 pl-[3px]">刃脚-1</button>
        <button className="block h-6 pl-[3px]">渠道栏板</button>
        <button className="block h-6 pl-[3px]">刃脚-1-1</button>
      </div>
      <PropertyPanel />
    </div>

    <div className="w-1 shrink-0 pt-[63px]">
      <button aria-label="收起左侧" className="flex h-[100px] w-1 items-center bg-[#5f6b78]">
        <svg className="h-[6px] w-1" viewBox="0 0 4 6"><path d="M4 0v6L1 3z" fill="#c8ccd0" /></svg>
      </button>
    </div>

    <div className="flex min-w-0 flex-1 flex-col">
      <Viewport />
      <div className="flex h-1 shrink-0 justify-center">
        <button aria-label="收起底部" className="flex h-1 w-[100px] justify-center bg-[#5f6b78]">
          <svg className="h-[3px] w-[6px]" viewBox="0 0 6 3"><path d="M0 0h6L3 3z" fill="#c8ccd0" /></svg>
        </button>
      </div>
      <RebarPanel />
    </div>

    <div className="w-1 shrink-0 pt-[63px]">
      <button aria-label="收起右侧" className="flex h-[100px] w-1 items-center bg-[#5f6b78]">
        <svg className="h-[6px] w-1" viewBox="0 0 4 6"><path d="M0 0v6l3-3z" fill="#c8ccd0" /></svg>
      </button>
    </div>
    <LayerTree />

    {/* hand drawn arrows pointing at the section edit button */}
    <svg className="pointer-events-none absolute bottom-0 left-[260px] h-[160px] w-[220px]" viewBox="260 559 220 160" fill="#ff2a17">
      <path d="M476 570.500v1.500L316 668l4 5-25 1 9-17 2 5 72-37z" />
      <path d="M373 660v1.500l-71 33-2 4-17-3 10-13 2 4 42-16z" />
      <path d="M296 674l-13 4-1 5-10-4 7-8 2 3z" />
    </svg>

    <AdPopup />
  </div>
);

export default App;
